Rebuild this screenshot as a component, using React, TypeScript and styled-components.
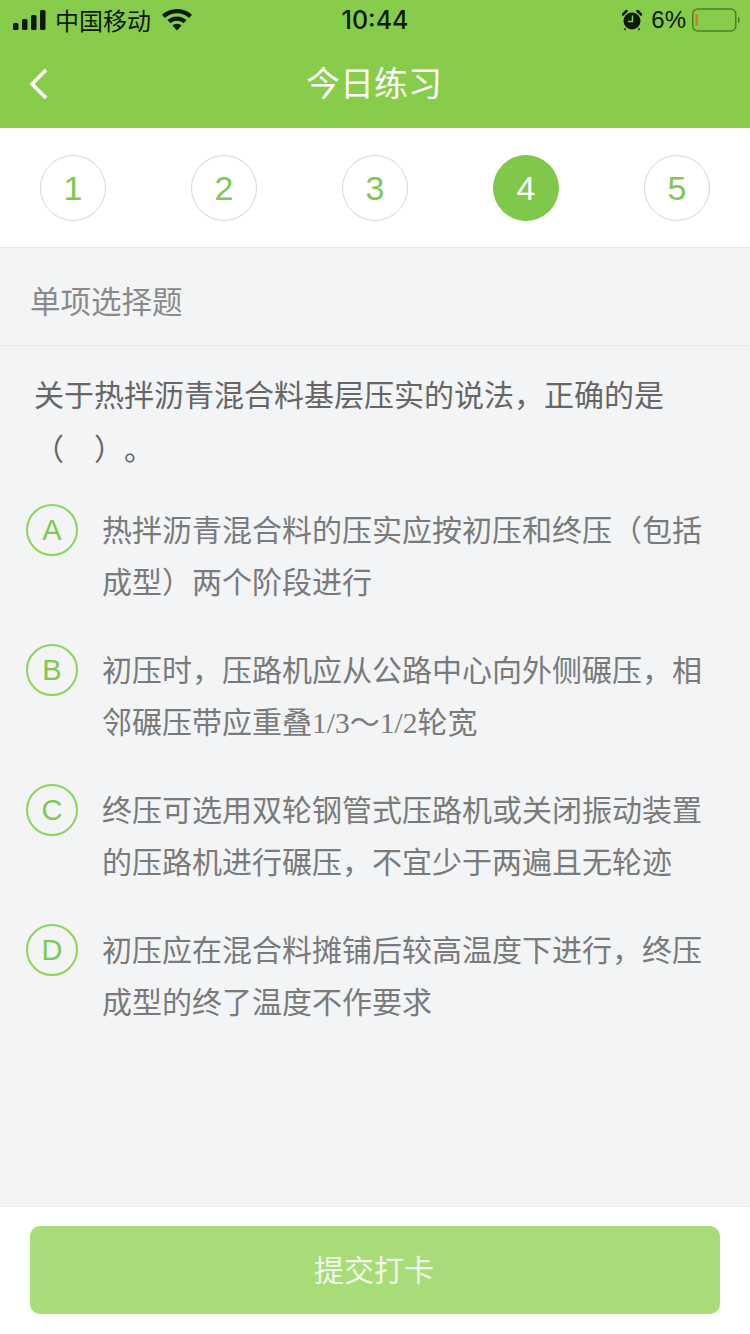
import styled, { createGlobalStyle } from "styled-components";

const GlobalStyle = createGlobalStyle`
  html, body {
    margin: 0;
    padding: 0;
    background: #f2f4f6;
  }
  * {
    box-sizing: border-box;
  }
`;

const CJK = `"Noto Sans CJK SC", sans-serif`;

const Page = styled.div`
  width: 750px;
  height: 1334px;
  display: flex;
  flex-direction: column;
  background-color: #f2f4f6;
  font-family: ${CJK};
  overflow: hidden;
`;

const Header = styled.header`
  height: 128px;
  background-color: #87cd4b;
  display: flex;
  flex-direction: column;
  flex-shrink: 0;
`;

const StatusBar = styled.div`
  height: 40px;
  display: grid;
  grid-template-columns: 1fr auto 1fr;
  align-items: center;
  color: #0c1a04;
`;

const StatusLeft = styled.div`
  display: flex;
  align-items: center;
  padding-left: 13px;
  gap: 9px;
`;

const StatusRight = styled.div`
  display: flex;
  align-items: center;
  justify-content: flex-end;
  padding-right: 10px;
`;

const Carrier = styled.span`
  font-size: 24px;
  line-height: 40px;
  font-weight: 400;
  margin-right: 2px;
`;

const Clock = styled.span`
  font-family: "Inter", "Liberation Sans", sans-serif;
  font-size: 25px;
  font-weight: 500;
  line-height: 40px;
`;

const Percent = styled.span`
  font-family: "Liberation Sans", sans-serif;
  font-size: 24px;
  line-height: 40px;
  margin: 0 6px 0 9px;
`;

const NavBar = styled.div`
  position: relative;
  flex: 1;
  display: flex;
  align-items: center;
  justify-content: center;
  padding: 0 2px 4px 0;
`;

const BackIcon = styled.svg`
  position: absolute;
  left: 29px;
  top: 28px;
`;

const Title = styled.h1`
  margin: 0;
  color: #fff;
  font-size: 34px;
  font-weight: 400;
  line-height: 84px;
`;

const StepBar = styled.div`
  height: 120px;
  flex-shrink: 0;
  background-color: #fff;
  border-bottom: 1px solid #e6e8ea;
  display: flex;
  align-items: flex-start;
  justify-content: space-between;
  padding: 27px 40px 0;
`;

const Step = styled.div<{ $active?: boolean }>`
  width: 66px;
  height: 66px;
  border-radius: 50%;
  display: flex;
  align-items: center;
  justify-content: center;
  font-family: "Liberation Sans", sans-serif;
  font-size: 34px;
  color: ${(p) => (p.$active ? "#fff" : "#80c850")};
  background-color: ${(p) => (p.$active ? "#7fc84a" : "#fff")};
  border: 1px solid ${(p) => (p.$active ? "#7fc84a" : "#d4d4d4")};
`;

const SectionLabel = styled.div`
  height: 98px;
  flex-shrink: 0;
  padding-left: 30px;
  font-size: 30.5px;
  line-height: 104px;
  color: #8a8a8a;
  border-bottom: 1px solid #e6e8ea;
`;

const Question = styled.p`
  margin: 20px 0 0;
  padding: 0 34px;
  font-size: 30px;
  line-height: 54px;
  color: #666;
  text-spacing-trim: space-all;
`;

const OptionList = styled.div`
  margin-top: 28px;
  display: flex;
  flex-direction: column;
  gap: 36px;
  padding: 0 26px;
`;

const Option = styled.div`
  display: flex;
  align-items: flex-start;
  gap: 24px;
`;

const Badge = styled.div`
  width: 52px;
  height: 52px;
  margin-top: 2px;
  flex-shrink: 0;
  border-radius: 50%;
  border: 2px solid #8ed35a;
  color: #80c850;
  display: flex;
  align-items: center;
  justify-content: center;
  font-family: "Liberation Sans", sans-serif;
  font-size: 29px;
`;

const OptionText = styled.div`
  font-size: 30px;
  line-height: 52px;
  color: #7a7a7a;
  width: 602px;
`;

const Serif = styled.span`
  font-family: "Liberation Serif", serif;
  font-size: 29.5px;
  line-height: 0;
`;

const Footer = styled.footer`
  margin-top: auto;
  height: 128px;
  flex-shrink: 0;
  background-color: #fff;
  border-top: 1px solid #eceeef;
  padding: 19px 30px 0;
`;

const SubmitButton = styled.button`
  width: 690px;
  height: 88px;
  padding: 0 2px 4px 0;
  border: none;
  border-radius: 10px;
  background-color: #a8dc78;
  color: #f2f9ea;
  font-family: ${CJK};
  font-size: 30px;
`;

const SignalIcon = () => (
  <svg width="33" height="20" viewBox="0 0 33 20" fill="#0c1a04">
    <rect x="0" y="13" width="5.500" height="7" rx="1.500" />
    <rect x="9" y="9" width="5.500" height="11" rx="1.500" />
    <rect x="18" y="5" width="5.500" height="15" rx="1.500" />
    <rect x="27" y="0" width="5.500" height="20" rx="1.500" />
  </svg>
);

const WifiIcon = () => (
  <svg width="30" height="22" viewBox="0 0 30 22" fill="#0c1a04">
    <path d="M15 0C9.200 0 4 2.200 0 5.800l2.900 3.100C6.100 6 10.300 4.200 15 4.200s8.900 1.800 12.100 4.700L30 5.800C26 2.200 20.800 0 15 0z" />
    <path d="M15 7.400c-3.700 0-7.100 1.400-9.600 3.700l3 3.200c1.800-1.600 4.100-2.600 6.600-2.600s4.800 1 6.600 2.600l3-3.200c-2.500-2.300-5.900-3.700-9.600-3.700z" />
    <path d="M15 14.800c-1.800 0-3.400.7-4.500 1.700L15 21.500l4.500-5c-1.100-1-2.700-1.700-4.500-1.700z" />
  </svg>
);

const AlarmIcon = () => (
  <svg width="20" height="22" viewBox="0 0 20 22">
    <circle cx="10" cy="12" r="8.500" fill="#0c1a04" />
    <path d="M1 5.500 4.500 2M19 5.500 15.500 2" stroke="#0c1a04" strokeWidth="2.500" strokeLinecap="round" />
    <path d="M3.500 19.500 2.500 21M16.500 19.500 17.500 21" stroke="#0c1a04" strokeWidth="1.500" />
    <path d="M10.500 6.500v6H6" fill="none" stroke="#87cd4b" strokeWidth="1.500" />
  </svg>
);

const BatteryIcon = () => (
  <svg width="48" height="24" viewBox="0 0 48 24">
    <rect x="0.750" y="1" width="43" height="22" rx="5" fill="none" stroke="#4f7f2a" strokeWidth="1.500" />
    <rect x="3.500" y="6" width="2.500" height="12" rx="1" fill="#d9772a" />
    <rect x="46" y="9" width="1.500" height="6" rx="0.750" fill="#4f7f2a" />
  </svg>
);

const steps = [1, 2, 3, 4, 5];

const options = [
  { key: "A", lines: <>热拌沥青混合料的压实应按初压和终压（包括<br />成型）两个阶段进行</> },
  { key: "B", lines: <>初压时，压路机应从公路中心向外侧碾压，相<br />邻碾压带应重叠<Serif>1/3</Serif>～<Serif>1/2</Serif>轮宽</> },
  { key: "C", lines: <>终压可选用双轮钢管式压路机或关闭振动装置<br />的压路机进行碾压，不宜少于两遍且无轮迹</> },
  { key: "D", lines: <>初压应在混合料摊铺后较高温度下进行，终压<br />成型的终了温度不作要求</> },
];

export default function App() {
  return (
    <Page>
      <GlobalStyle />
      <Header>
        <StatusBar>
          <StatusLeft>
            <SignalIcon />
            <Carrier>中国移动</Carrier>
            <WifiIcon />
          </StatusLeft>
          <Clock>10:44</Clock>
          <StatusRight>
            <AlarmIcon />
            <Percent>6%</Percent>
            <BatteryIcon />
          </StatusRight>
        </StatusBar>
        <NavBar>
          <BackIcon width="20" height="32" viewBox="0 0 20 32">
            <path d="M17 2 3 16l14 14" fill="none" stroke="#fff" strokeWidth="3.500" />
          </BackIcon>
          <Title>今日练习</Title>
        </NavBar>
      </Header>
      <StepBar>
        {steps.map((n) => (
          <Step key={n} $active={n === 4}>{n}</Step>
        ))}
      </StepBar>
      <SectionLabel>单项选择题</SectionLabel>
      <Question>
        关于热拌沥青混合料基层压实的说法，正确的是
        <br />
        （　）。
      </Question>
      <OptionList>
        {options.map((o) => (
          <Option key={o.key}>
            <Badge>{o.key}</Badge>
            <OptionText>{o.lines}</OptionText>
          </Option>
        ))}
      </OptionList>
      <Footer>
        <SubmitButton>提交打卡</SubmitButton>
      </Footer>
    </Page>
  );
}
